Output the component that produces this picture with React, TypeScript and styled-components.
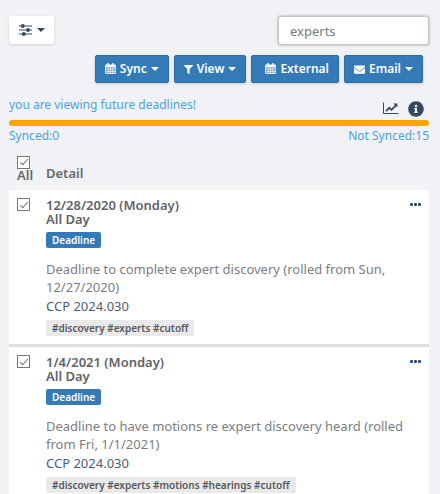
import React from "react";
import styled, { createGlobalStyle } from "styled-components";
import { FaFilter, FaEnvelope, FaInfoCircle } from "react-icons/fa";

const GlobalStyle = createGlobalStyle`
  *, *::before, *::after { box-sizing: border-box; }
  body {
    margin: 0;
    background: #f0f2f5;
    color: #676a6d;
    font-family: "Noto Sans", "Open Sans", sans-serif;
    font-size: 13px;
    line-height: 18px;
  }
  button, input { font: inherit; }
`;

const Page = styled.main`
  padding: 16px 11px 0 9px;
`;

const TopBar = styled.header`
  display: flex;
  justify-content: space-between;
  align-items: flex-start;
`;

const FilterButton = styled.button`
  display: flex;
  align-items: center;
  justify-content: center;
  gap: 5px;
  width: 45px;
  height: 28px;
  padding: 0;
  border: 0;
  border-radius: 2px;
  background: #fff;
  color: #34495e;
  box-shadow: 0 1px 3px rgba(0, 0, 0, 0.14);
`;

const SearchInput = styled.input`
  width: 151px;
  height: 29px;
  padding: 0 11px;
  border: 1px solid #c4c6c8;
  border-radius: 3px;
  background: #fff;
  color: #777a7d;
  outline: 0;
  box-shadow: 0 0 2px 1px rgba(0, 0, 0, 0.16);
`;

const Toolbar = styled.nav`
  display: flex;
  justify-content: flex-end;
  gap: 5px;
  margin-top: 10px;
  padding-right: 6px;
`;

const ToolButton = styled.button<{ $wide?: boolean }>`
  display: flex;
  align-items: center;
  gap: 4px;
  height: 28px;
  padding: 0 ${(p) => (p.$wide ? "9px 0 13px" : "9px")};
  border: 1px solid #2e6da4;
  border-radius: 2px;
  background: #337ab7;
  color: #fff;
  font-size: 12px;
  font-weight: 600;
  box-shadow: 0 1px 3px rgba(0, 0, 0, 0.16);
`;

const Caret = styled.span`
  border: 4px solid transparent;
  border-top-color: currentColor;
  border-bottom: 0;
`;

const Notice = styled.div`
  display: flex;
  justify-content: space-between;
  align-items: center;
  height: 24px;
  margin-top: 12px;
  color: #4aa3df;
  font-size: 12px;
`;

const NoticeText = styled.span`
  margin-bottom: 4px;
`;

const NoticeActions = styled.div`
  display: flex;
  align-items: center;
  gap: 9px;
  padding: 3px 5px 0 0;
`;

const IconButton = styled.button`
  display: flex;
  padding: 0;
  border: 0;
  background: none;
  color: #34495e;
`;

const Progress = styled.div`
  height: 6px;
  margin-top: 1px;
  border-radius: 3px;
  background: #ffa500;
`;

const Counts = styled.div`
  display: flex;
  justify-content: space-between;
  margin-top: 1px;
  color: #4aa3df;
  font-size: 12px;
`;

const ListHead = styled.div`
  display: grid;
  grid-template-columns: 29px 1fr;
  align-items: center;
  height: 35px;
  margin-top: 10px;
  padding: 0 8px;
  font-weight: 600;
`;

const SelectAll = styled.label`
  display: flex;
  flex-direction: column;
  margin-top: -9px;
  line-height: 12px;
`;

const Check = styled.input.attrs({ type: "checkbox" })`
  appearance: none;
  display: grid;
  place-items: center;
  width: 13px;
  height: 13px;
  margin: 0;
  border: 1px solid #777;
  background: #fff;

  &:checked::after {
    content: "";
    width: 4px;
    height: 8px;
    margin-bottom: 2px;
    border: solid #666;
    border-width: 0 1px 1px 0;
    transform: rotate(42deg);
  }
`;

const List = styled.ul`
  margin: 0;
  padding: 0;
  list-style: none;
`;

const Item = styled.li`
  display: grid;
  grid-template-columns: 29px 1fr auto;
  align-items: start;
  padding: 8px;
  border-bottom: 3px solid #dddfe0;
  background: #fff;
`;

const When = styled.h2`
  margin: 0;
  font-size: 13px;
  font-weight: 600;
  line-height: 14px;
  color: #606366;
`;

const Badge = styled.span`
  display: block;
  width: fit-content;
  height: 16px;
  margin-top: 6px;
  padding: 0 6px;
  border-radius: 2px;
  background: #337ab7;
  color: #fff;
  font-size: 10px;
  font-weight: 600;
  line-height: 16px;
`;

const Description = styled.p`
  margin: 12px 0 0;
  color: #7b7e81;
`;

const CaseLink = styled.a`
  display: block;
  width: fit-content;
  color: #4a5f75;
  line-height: 20px;
  text-decoration: none;
`;

const Tags = styled(Badge)`
  margin-top: 4px;
  background: #e9e9e9;
  color: #55585b;
`;

const Body = styled.div`
  min-width: 0;
  margin-right: -12px;
`;

const CalendarIcon = () => (
  <svg width="11" height="12" viewBox="0 0 11 12" fill="currentColor" aria-hidden="true">
    <path
      fillRule="evenodd"
      d="M2 1.5V.7Q2 .1 2.6.1H3Q3.6.1 3.6.7V1.5H7.2V.7Q7.2.1 7.8.1H8.2Q8.8.1 8.8.7V1.5H10Q10.8 1.5 10.8 2.3V10.3Q10.8 11.1 10 11.1H1Q.2 11.1.2 10.3V2.3Q.2 1.5 1 1.5ZM1 4V5.7H3V4ZM3.6 4V5.7H5.3V4ZM5.9 4V5.7H7.5V4ZM8.1 4V5.7H10V4ZM1 6.3V8H3V6.3ZM3.6 6.3V8H5.3V6.3ZM5.9 6.3V8H7.5V6.3ZM8.1 6.3V8H10V6.3ZM1 8.6V10.3H3V8.6ZM3.6 8.6V10.3H5.3V8.6ZM5.9 8.6V10.3H7.5V8.6ZM8.1 8.6V10.3H10V8.6Z"
    />
    <path d="M.8 3.8H10.2V10.5H.8Z" opacity=".35" />
  </svg>
);

const SlidersIcon = () => (
  <svg width="13" height="12" viewBox="0 0 13 12" fill="currentColor" aria-hidden="true">
    <path d="M0 1.4H13V2.6H0ZM0 5.4H13V6.6H0ZM0 9.4H13V10.6H0Z" />
    <circle cx="3.8" cy="2" r="1.9" />
    <circle cx="9" cy="6" r="1.9" />
    <circle cx="4.8" cy="10" r="1.9" />
  </svg>
);

const ChartIcon = () => (
  <svg width="16" height="13" viewBox="0 0 16 13" fill="none" stroke="currentColor" aria-hidden="true">
    <path d="M.5 .5V11.5H15.5" strokeWidth="1" />
    <path d="M3 9.2L6.3 5.8L8.5 7.8L12.8 3.3" strokeWidth="1.8" />
    <path d="M10.3 1.4H14.4V5.5Z" fill="currentColor" stroke="none" />
  </svg>
);

const DotsIcon = () => (
  <svg width="11" height="4" viewBox="0 0 11 4" fill="currentColor" aria-hidden="true">
    <rect x="0" y="0" width="3" height="3" rx="1" />
    <rect x="4" y="0" width="3" height="3" rx="1" />
    <rect x="8" y="0" width="3" height="3" rx="1" />
  </svg>
);

const MoreButton = styled(IconButton)`
  padding: 5px 0 0;
`;

const deadlines = [
  {
    date: "12/28/2020 (Monday)",
    text: "Deadline to complete expert discovery (rolled from Sun, 12/27/2020)",
    rule: "CCP 2024.030",
    tags: "#discovery #experts #cutoff",
  },
  {
    date: "1/4/2021 (Monday)",
    text: "Deadline to have motions re expert discovery heard (rolled from Fri, 1/1/2021)",
    rule: "CCP 2024.030",
    tags: "#discovery #experts #motions #hearings #cutoff",
  },
];

export default function App() {
  return (
    <>
      <GlobalStyle />
      <Page>
        <TopBar>
          <FilterButton aria-label="Filters">
            <SlidersIcon />
            <Caret />
          </FilterButton>
          <SearchInput aria-label="Search deadlines" defaultValue="experts" />
        </TopBar>
        <Toolbar>
          <ToolButton>
            <CalendarIcon /> Sync <Caret />
          </ToolButton>
          <ToolButton>
            <FaFilter size={9} /> View <Caret />
          </ToolButton>
          <ToolButton $wide>
            <CalendarIcon /> External
          </ToolButton>
          <ToolButton>
            <FaEnvelope size={11} /> Email <Caret />
          </ToolButton>
        </Toolbar>
        <Notice>
          <NoticeText>you are viewing future deadlines!</NoticeText>
          <NoticeActions>
            <IconButton aria-label="Chart">
              <ChartIcon />
            </IconButton>
            <IconButton aria-label="Information">
              <FaInfoCircle size={16} />
            </IconButton>
          </NoticeActions>
        </Notice>
        <Progress />
        <Counts>
          <span>Synced:0</span>
          <span>Not Synced:15</span>
        </Counts>
        <ListHead>
          <SelectAll>
            <Check defaultChecked />
            All
          </SelectAll>
          <span>Detail</span>
        </ListHead>
        <List>
          {deadlines.map((d) => (
            <Item key={d.date}>
              <Check defaultChecked aria-label={`Select ${d.date}`} />
              <Body>
                <When>
                  {d.date}
                  <br />
                  All Day
                </When>
                <Badge>Deadline</Badge>
                <Description>{d.text}</Description>
                <CaseLink href="#">{d.rule}</CaseLink>
                <Tags>{d.tags}</Tags>
              </Body>
              <MoreButton aria-label="More actions">
                <DotsIcon />
              </MoreButton>
            </Item>
          ))}
        </List>
      </Page>
    </>
  );
}
